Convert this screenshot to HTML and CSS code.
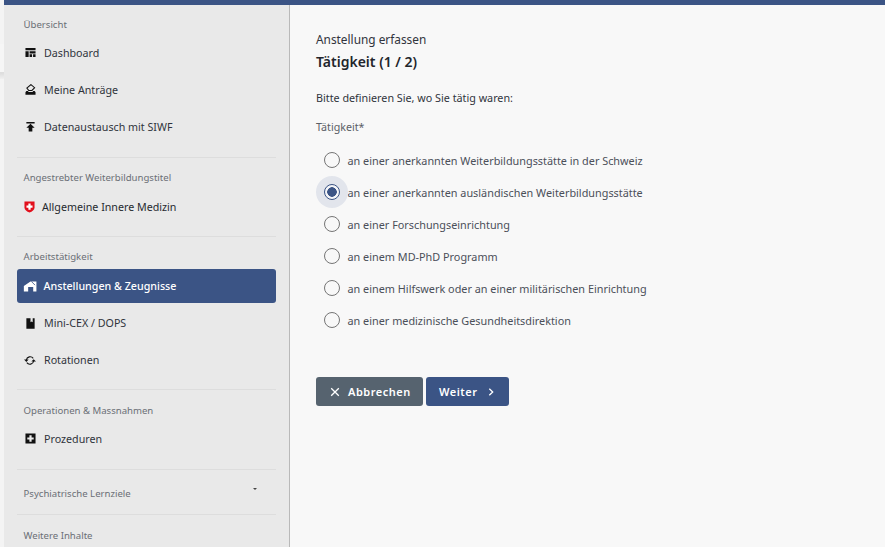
FILE: index.html
```html
<!DOCTYPE html>
<html lang="de">
<head>
<meta charset="utf-8">
<title>Anstellung erfassen</title>
<link rel="stylesheet" href="styles.css">
</head>
<body>
<div class="edge"><div class="edge-a"></div><div class="edge-b"></div></div>
<div class="app">
  <div class="topbar"></div>
  <div class="columns">
    <nav class="sidebar">
      <section class="group group-first">
        <h4 class="label">Übersicht</h4>
        <a class="item"><svg class="ic" viewBox="0 0 12 12"><path d="M0.500 1h11v2.500H0.500zM0.500 4.500h3.500V11H0.500zM5 4.500h6.500v2.500H5zM5 8h2.700v3H5zM8.800 8h2.700v3H8.800z"/></svg>Dashboard</a>
        <a class="item"><svg class="ic" viewBox="0 0 12 12"><path d="M6.500 .6 10.500 4 7.600 7H4L2 4.500z" fill="none" stroke="#111" stroke-width="1.100"/><path d="M1.500 7.500h1.700L4 8.600h4.200L9 7.500h1.500L11.500 9V11.800H.5V9z"/></svg>Meine Anträge</a>
        <a class="item"><svg class="ic" viewBox="0 0 12 12"><path d="M1.500 1h9v1.600h-9zM6 3 10.500 7.400H8V11.500H4V7.400H1.500z"/></svg>Datenaustausch mit SIWF</a>
      </section>
      <section class="group group-title">
        <h4 class="label">Angestrebter Weiterbildungstitel</h4>
        <a class="item item-flag"><svg class="ic-flag" viewBox="0 0 12 13"><path d="M.5 .5h11v6.500c0 2.700-2.600 4.500-5.500 5.500C3.100 11.500.5 9.700.5 7z" fill="#e2101c"/><path d="M4.800 2.800h2.400v2.100h2.100v2.400H7.200v2.100H4.800V7.300H2.700V4.900h2.100z" fill="#fff"/></svg>Allgemeine Innere Medizin</a>
      </section>
      <section class="group group-work">
        <h4 class="label">Arbeitstätigkeit</h4>
        <a class="item active"><svg class="ic ic-home" viewBox="0 0 14 12"><path d="M7.500 .5H14V11.500H10.500V6.500H5V11.500H.3V5.500z" fill="#fff"/><path d="M8.500 .5 12.500 4.500" stroke="#3b5485" stroke-width=".9" fill="none"/></svg>Anstellungen &amp; Zeugnisse</a>
        <a class="item"><svg class="ic" viewBox="0 0 12 12"><path d="M1.500 .2h9v11.600h-9zM6 .2v4.500l1.200-1 1.200 1V.2z" fill-rule="evenodd"/></svg>Mini-CEX / DOPS</a>
        <a class="item"><svg class="ic ic-wide" viewBox="0 0 13 12"><path d="M2.500 5.500A4.200 4.200 0 0 1 10 3.600M10.500 6.500A4.200 4.200 0 0 1 3 8.400" fill="none" stroke="#111" stroke-width="1.200"/><path d="M0 5h5L2.500 7.500zM8 7h5L10.500 4.500z"/></svg>Rotationen</a>
      </section>
      <section class="group group-ops">
        <h4 class="label">Operationen &amp; Massnahmen</h4>
        <a class="item"><svg class="ic" viewBox="0 0 12 12"><path d="M.5 .5h11v11H.5zM4.800 2.500v2.300H2.500v2.400h2.300v2.300h2.400V7.200h2.300V4.800H7.200V2.500z" fill-rule="evenodd"/></svg>Prozeduren</a>
      </section>
      <section class="group group-psy">
        <h4 class="label">Psychiatrische Lernziele</h4>
        <span class="caret"></span>
      </section>
      <section class="group group-last">
        <h4 class="label">Weitere Inhalte</h4>
      </section>
    </nav>
    <main class="content">
      <div class="eyebrow">Anstellung erfassen</div>
      <h1 class="title">Tätigkeit (1 / 2)</h1>
      <p class="intro">Bitte definieren Sie, wo Sie tätig waren:</p>
      <div class="field-label">Tätigkeit*</div>
      <div class="radios">
        <label class="radio"><span class="dot"></span>an einer anerkannten Weiterbildungsstätte in der Schweiz</label>
        <label class="radio checked"><span class="dot"></span>an einer anerkannten ausländischen Weiterbildungsstätte</label>
        <label class="radio"><span class="dot"></span>an einer Forschungseinrichtung</label>
        <label class="radio"><span class="dot"></span>an einem MD-PhD Programm</label>
        <label class="radio"><span class="dot"></span>an einem Hilfswerk oder an einer militärischen Einrichtung</label>
        <label class="radio"><span class="dot"></span>an einer medizinische Gesundheitsdirektion</label>
      </div>
      <div class="actions">
        <button class="btn btn-cancel"><svg class="btn-ic" viewBox="0 0 10 10"><path d="M1.200 1.200 8.800 8.800M8.800 1.200 1.200 8.800" stroke="#fff" stroke-width="1.300" fill="none"/></svg>Abbrechen</button>
        <button class="btn btn-next">Weiter<svg class="btn-ic btn-ic-next" viewBox="0 0 10 10"><path d="M3.300 1.800 6.700 5 3.300 8.200" stroke="#fff" stroke-width="1.300" fill="none"/></svg></button>
      </div>
    </main>
  </div>
</div>
</body>
</html>
```
FILE: styles.css
```css
* { box-sizing: border-box; }
html, body { margin: 0; height: 100%; overflow: hidden; }
body {
  display: flex;
  width: 885px;
  height: 547px;
  font-family: "Noto Sans", sans-serif;
  background: #f8f8f8;
  color: #2b2f36;
}
.edge { width: 4px; flex: none; background: #f4f4f4; padding-top: 44px; }
.edge-a { height: 29px; border-bottom: 1px solid #dedede; background: #f6f6f6; }
.edge-b { height: 6px; background: linear-gradient(#dddddd, #f0f0f0); }
.app { flex: 1; display: flex; flex-direction: column; min-width: 0; }
.topbar { height: 5px; flex: none; background: #3b5485; }
.columns { flex: 1; display: flex; min-height: 0; }
.sidebar {
  width: 286px;
  flex: none;
  background: #e9e9e9;
  border-right: 1px solid #b9b9b9;
  padding: 0 13px;
  overflow: hidden;
}
.group { position: relative; border-bottom: 1px solid #dddddd; }
.group-first { height: 153px; padding-top: 14px; }
.group-title { height: 79px; padding-top: 14px; }
.group-work { height: 153px; padding-top: 14px; }
.group-ops { height: 80px; padding-top: 15px; }
.group-psy { height: 45px; padding-top: 18px; }
.group-last { border-bottom: 0; padding-top: 15px; }
.label {
  margin: 0;
  padding-left: 6.500px;
  font-size: 9.600px;
  line-height: 12px;
  font-weight: 400;
  color: #6b6f76;
}
.group-first .label { margin-bottom: 3px; }
.group-title .label { margin-bottom: 4px; }
.group-work .label { margin-bottom: 6px; }
.group-ops .label { margin-bottom: 3px; }
.item {
  display: flex;
  align-items: center;
  height: 37px;
  padding-left: 8px;
  font-size: 10.700px;
  color: #30343c;
}
.item-flag { padding-left: 7px; color: #26292f; }
.active {
  height: 34px;
  margin-bottom: 1.500px;
  padding-left: 6px;
  background: #3b5485;
  border-radius: 3px;
  color: #fff;
  font-weight: 500;
}
.ic { width: 11px; height: 11px; flex: none; margin-right: 8px; fill: #111; }
.ic-home { width: 14px; margin-right: 6.500px; }
.ic-wide { width: 12px; margin-left: -1px; }
.ic-flag { width: 11px; height: 12px; flex: none; margin-right: 7px; }
.caret {
  position: absolute;
  right: 19px;
  top: 18px;
  width: 0;
  height: 0;
  border-left: 2.500px solid transparent;
  border-right: 2.500px solid transparent;
  border-top: 2.500px solid #444;
}
.content { flex: 1; min-width: 0; padding: 26px 0 0 26px; background: #f8f8f8; }
.eyebrow { font-size: 11.850px; line-height: 16px; color: #30343c; }
.title { margin: 5px 0 0; font-size: 14px; line-height: 20px; font-weight: 600; color: #22252b; }
.intro { margin: 19px 0 0; font-size: 10.770px; line-height: 14px; color: #30343c; }
.field-label { margin-top: 15px; font-size: 10.700px; line-height: 14px; color: #5a5e66; }
.radios { margin-top: 10px; display: flex; flex-direction: column; }
.radio {
  position: relative;
  display: flex;
  align-items: center;
  height: 32px;
  padding-left: 8px;
  font-size: 10.850px;
  color: #4b4f58;
}
.dot {
  position: relative;
  width: 16px;
  height: 16px;
  flex: none;
  margin-right: 7.500px;
  border: 1px solid #757575;
  border-radius: 50%;
  background: #f8f8f8;
}
.checked::before {
  content: "";
  position: absolute;
  left: 0;
  top: 0;
  width: 32px;
  height: 32px;
  border-radius: 50%;
  background: #e2e5ec;
}
.checked .dot {
  border-color: #3b5485;
  background: radial-gradient(circle, #3b5485 0 4.500px, #f4f5f8 5px);
}
.actions { margin-top: 41px; display: flex; gap: 3px; }
.btn {
  display: flex;
  align-items: center;
  height: 29px;
  border: 0;
  border-radius: 3px;
  color: #fff;
  font-family: inherit;
  font-size: 11px;
  font-weight: 600;
  letter-spacing: .5px;
  padding: 0;
}
.btn-cancel { width: 107px; padding-left: 14px; background: #56636f; }
.btn-cancel .btn-ic { margin-right: 8px; }
.btn-next { width: 83px; padding-left: 13px; background: #3b5485; }
.btn-ic { width: 10px; height: 10px; flex: none; }
.btn-ic-next { margin-left: 8px; }
```
